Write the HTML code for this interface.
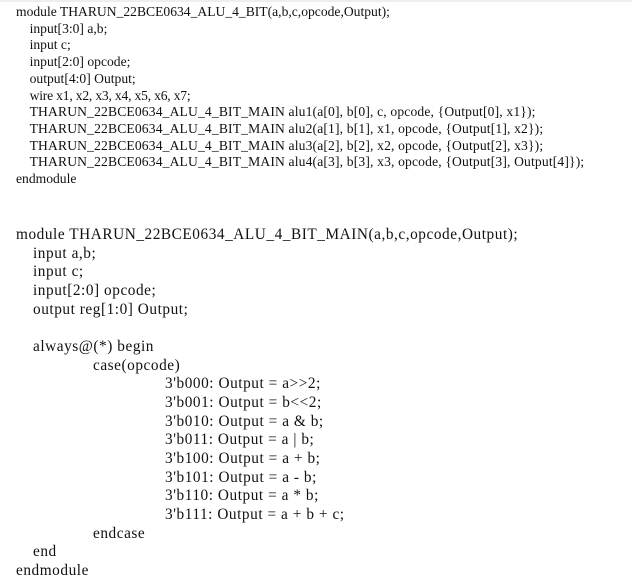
<!DOCTYPE html>
<html><head><style>
body{margin:0;width:632px;height:582px;background:#fff;position:relative;overflow:hidden;font-family:"Liberation Serif",serif;color:#111}
.t{position:absolute;left:0;top:0;white-space:pre;font-size:13.6px;line-height:16.7px}
.b{position:absolute;left:0;top:226px;white-space:pre;font-size:15.3px;line-height:18.65px;letter-spacing:0.55px}
.bar{position:absolute;left:0;top:0;width:632px;height:2px;background:#eee}
.w{letter-spacing:0.15px}
</style></head><body>
<div class="bar"></div>
<div class="t" style="left:16px;top:4px">module THARUN_22BCE0634_ALU_4_BIT(a,b,c,opcode,Output);
    input[3:0] a,b;
    input c;
    input[2:0] opcode;
    output[4:0] Output;
    <span style="letter-spacing:-0.2px">wire x1, x2, x3, x4, x5, x6, x7;</span>
    <span class="w">THARUN_22BCE0634_ALU_4_BIT_MAIN alu1(a[0], b[0], c, opcode, {Output[0], x1});</span>
    <span class="w">THARUN_22BCE0634_ALU_4_BIT_MAIN alu2(a[1], b[1], x1, opcode, {Output[1], x2});</span>
    <span class="w">THARUN_22BCE0634_ALU_4_BIT_MAIN alu3(a[2], b[2], x2, opcode, {Output[2], x3});</span>
    <span class="w">THARUN_22BCE0634_ALU_4_BIT_MAIN alu4(a[3], b[3], x3, opcode, {Output[3], Output[4]});</span>
endmodule</div>
<div class="b" style="left:16px"><span>module THARUN_22BCE0634_ALU_4_BIT_MAIN(a,b,c,opcode,Output);</span>
<span style="padding-left:17px">input a,b;</span>
<span style="padding-left:17px">input c;</span>
<span style="padding-left:17px">input[2:0] opcode;</span>
<span style="padding-left:17px">output reg[1:0] Output;</span>

<span style="padding-left:17px">always@(*) begin</span>
<span style="padding-left:77px">case(opcode)</span>
<span style="padding-left:149px">3'b000: Output = a&gt;&gt;2;</span>
<span style="padding-left:149px">3'b001: Output = b&lt;&lt;2;</span>
<span style="padding-left:149px">3'b010: Output = a &amp; b;</span>
<span style="padding-left:149px">3'b011: Output = a | b;</span>
<span style="padding-left:149px">3'b100: Output = a + b;</span>
<span style="padding-left:149px">3'b101: Output = a - b;</span>
<span style="padding-left:149px">3'b110: Output = a * b;</span>
<span style="padding-left:149px">3'b111: Output = a + b + c;</span>
<span style="padding-left:77px">endcase</span>
<span style="padding-left:17px">end</span>
endmodule</div>
</body></html>
